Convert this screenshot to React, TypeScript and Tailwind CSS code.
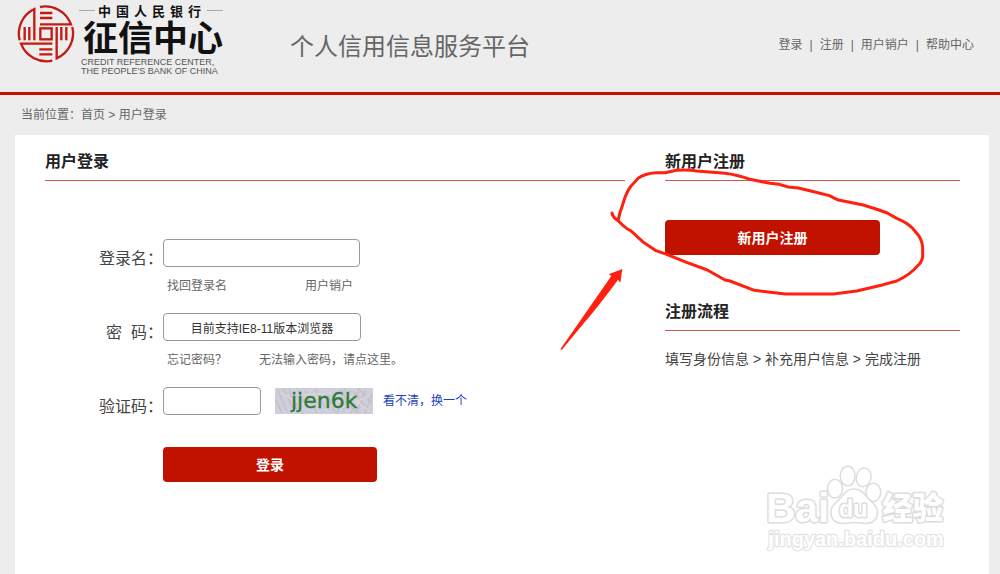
import React from 'react';

const navLinks = ['登录', '注册', '用户销户', '帮助中心'];

const Seal: React.FC = () => (
    <g transform="translate(14 2) scale(0.3333)" fill="none" stroke="#c41a14" strokeWidth={7}>
        <rect x="79" y="79" width="34" height="33" />
        <path d="M78 15A82 82 0 0 1 171 67H78" />
        <path d="M78 33H115M78 48H115" />
        <path d="M17 115A82 82 0 0 1 61 21V115" />
        <path d="M32 75V115M46 75V115" />
        <path d="M115 176A82 82 0 0 1 21 125H115" />
        <path d="M76 142H115M76 157H115" />
        <path d="M175 75A82 82 0 0 1 128 169V75" />
        <path d="M142 75V115M157 75V115" />
    </g>
);

const Logo: React.FC = () => (
    <svg className="h-20 w-60 shrink-0 self-start" viewBox="0 0 240 80" role="img" aria-label="征信中心">
        <Seal />
        <path d="M79 10.5H95M207 10.5H223" stroke="#aaa" />
        <g fill="#111" fontFamily="'Liberation Sans', 'Noto Sans CJK SC', sans-serif" fontWeight="700">
            {['中', '国', '人', '民', '银', '行'].map((char, i) => (
                <text key={char} x={98 + i * 18} y="16" fontSize="13">{char}</text>
            ))}
            <text x="83" y="51" fontSize="35">征信中心</text>
        </g>
        <g fill="#555" fontFamily="'Liberation Sans', Arial, sans-serif" fontSize="9">
            <text x="81" y="65">CREDIT REFERENCE CENTER,</text>
            <text x="81" y="74">THE PEOPLE'S BANK OF CHINA</text>
        </g>
    </svg>
);

const Captcha: React.FC = () => (
    <svg className="ml-[14px] h-[26px] w-[98px]" viewBox="0 0 98 26" role="img" aria-label="验证码图片">
        <rect width="98" height="26" fill="#cfcde0" />
        <g fill="none" strokeWidth="1.5">
            <path stroke="#c6c2c0" d="M3 2L12 24M8 0L18 20M14 1L23 25M22 0L29 15M70 0L62 26M76 2L68 24M84 0L76 26M90 3L82 24M97 5L90 26" />
            <path stroke="#c4c2ba" d="M1 12L7 25M16 8L28 26M30 3L42 25M40 1L50 20M52 4L60 25M66 2L74 16M78 3L90 18M84 1L97 15M70 13L84 26" />
            <path stroke="#dbd7d2" d="M5 5L22 13M23 18L46 8M50 22L68 11M66 20L94 8M73 6L94 23M27 7L56 5" />
        </g>
        <text x="16" y="20" fontSize="22" fill="#2c7c36" stroke="#2c7c36" strokeWidth="0.3" fontFamily="'DejaVu Sans', sans-serif">jjen6k</text>
    </svg>
);

const SectionTitle: React.FC<{ children: React.ReactNode }> = ({ children }) => (
    <h2 className="border-b border-[#d9534f] pt-[15px] pb-[6px] text-base leading-6 font-bold text-[#222]">{children}</h2>
);

const labelClass = 'flex h-7 items-end justify-end text-base leading-4 whitespace-pre text-[#444]';
const inputClass = 'h-7 rounded border border-[#999] bg-white outline-none focus:border-[#c41200]';
const hintClass = 'flex h-[22px] items-center text-xs text-[#666]';

const LoginForm: React.FC = () => (
    <form className="mt-[58px] grid grid-cols-[118px_1fr] gap-y-4" onSubmit={(e) => e.preventDefault()}>
        <label htmlFor="username" className={labelClass}>登录名：</label>
        <div className="flex flex-col items-start gap-2">
            <input id="username" type="text" className={`${inputClass} w-[197px]`} />
            <div className={hintClass}>
                <a href="#" className="ml-1 w-[138px]">找回登录名</a>
                <a href="#">用户销户</a>
            </div>
        </div>

        <label htmlFor="password" className={labelClass}>密{'\u00a0\u00a0'}码：</label>
        <div className="flex flex-col items-start gap-2">
            <input
                id="password"
                type="text"
                readOnly
                value="目前支持IE8-11版本浏览器"
                className={`${inputClass} w-[198px] text-center text-xs text-[#333]`}
            />
            <div className={hintClass}>
                <a href="#" className="ml-1 w-[92px]">忘记密码？</a>
                <a href="#">无法输入密码，请点这里。</a>
            </div>
        </div>

        <label htmlFor="captcha" className={labelClass}>验证码：</label>
        <div className="flex items-center">
            <input id="captcha" type="text" className={`${inputClass} w-[98px]`} />
            <Captcha />
            <a href="#" className="ml-[10px] text-xs text-[#1c3fc0]">看不清，换一个</a>
        </div>

        <button type="submit" className="col-start-2 mt-4 h-[35px] w-[214px] rounded bg-[#c11200] text-sm font-bold text-white">
            登录
        </button>
    </form>
);

// Hand-drawn circle and arrow pointing at the register button
const Annotation: React.FC = () => (
    <svg className="pointer-events-none absolute top-[140px] right-0 h-60 w-[460px]" viewBox="0 0 1380 720" aria-hidden="true">
        <path
            fill="none"
            stroke="#ff2010"
            strokeWidth="9"
            strokeLinecap="round"
            strokeLinejoin="round"
            d="M216 219Q218 232 234 242Q238 220 248 194Q258 158 273 138Q285 126 294 115Q315 100 347 98H375L410 91Q440 88 470 93L555 100Q590 104 630 118L690 130L718 133L745 141L775 144Q810 152 868 167L892 179L970 195Q1010 207 1042 219L1070 235Q1100 247 1117 264L1137 288Q1148 308 1148 325V350Q1145 368 1131 379Q1112 403 1070 423L1030 434L950 453L880 462H736L643 451L570 423L555 420L502 390L440 367L380 343L348 332L308 305L272 272Q262 268 251 258L234 242"
        />
        <path fill="#ff2010" d="M61 628L214 408L206 403L247 387L241 428L234 419Q180 493 132 549L65 630Z" />
    </svg>
);

const Watermark: React.FC = () => (
    <svg
        className="pointer-events-none absolute right-0 bottom-0 h-[124px] w-[250px]"
        viewBox="0 0 750 372"
        fill="#fff"
        stroke="#ddd"
        strokeWidth="9"
        strokeLinejoin="round"
        paintOrder="stroke"
        fontFamily="'Liberation Sans', Arial, sans-serif"
        fontWeight="700"
        aria-hidden="true"
    >
        <text x="48" y="216" fontSize="122">Bai</text>
        <g strokeWidth="9">
            <ellipse cx="255" cy="116" rx="20" ry="26" />
            <ellipse cx="293" cy="78" rx="20" ry="27" />
            <ellipse cx="341" cy="82" rx="20" ry="26" transform="rotate(12 341 82)" />
            <ellipse cx="370" cy="127" rx="20" ry="25" />
            <path d="M312 119C293 119 284 134 272 146C259 160 244 168 245 190C247 216 270 221 292 217Q312 213 334 217C358 221 378 214 380 190C381 169 366 160 353 146C341 133 332 119 312 119Z" />
        </g>
        <text x="267" y="202" fontSize="70">du</text>
        <text x="397" y="208" fontSize="91" fontWeight="900" fontFamily="'Noto Sans CJK SC', sans-serif">经验</text>
        <text x="55" y="288" fontSize="60" stroke="#e4e4e4" strokeWidth="7">jingyan.baidu.com</text>
    </svg>
);

const App: React.FC = () => (
    <div className="relative flex min-h-screen flex-col bg-[#ededed] font-['Liberation_Sans','Noto_Sans_CJK_SC',sans-serif]">
        <header className="flex h-[95px] items-center border-b-3 border-[#c41200] pr-[26px]">
            <Logo />
            <h1 className="ml-[50px] pt-[2px] text-2xl text-[#666]">个人信用信息服务平台</h1>
            <nav className="mb-[3px] ml-auto flex items-center gap-[7px] text-xs text-[#666]">
                {navLinks.map((link, i) => (
                    <React.Fragment key={link}>
                        {i > 0 && <span>|</span>}
                        <a href="#">{link}</a>
                    </React.Fragment>
                ))}
            </nav>
        </header>

        <div className="flex h-10 items-center pl-[21px] text-xs text-[#666]">
            当前位置：<a href="#">首页</a>&nbsp;&gt;&nbsp;<span>用户登录</span>
        </div>

        <main className="mr-[11px] ml-[15px] grid flex-1 grid-cols-[1fr_295px] gap-10 bg-white pr-[29px] pl-[30px]">
            <section>
                <SectionTitle>用户登录</SectionTitle>
                <LoginForm />
            </section>
            <section>
                <SectionTitle>新用户注册</SectionTitle>
                <button type="button" className="mt-[39px] mb-[30px] block h-[35px] w-[215px] rounded bg-[#c11200] text-sm font-bold text-white">
                    新用户注册
                </button>
                <SectionTitle>注册流程</SectionTitle>
                <p className="mt-4 text-sm leading-6 text-[#444]">填写身份信息 &gt; 补充用户信息 &gt; 完成注册</p>
            </section>
        </main>

        <Annotation />
        <Watermark />
    </div>
);

export default App;
